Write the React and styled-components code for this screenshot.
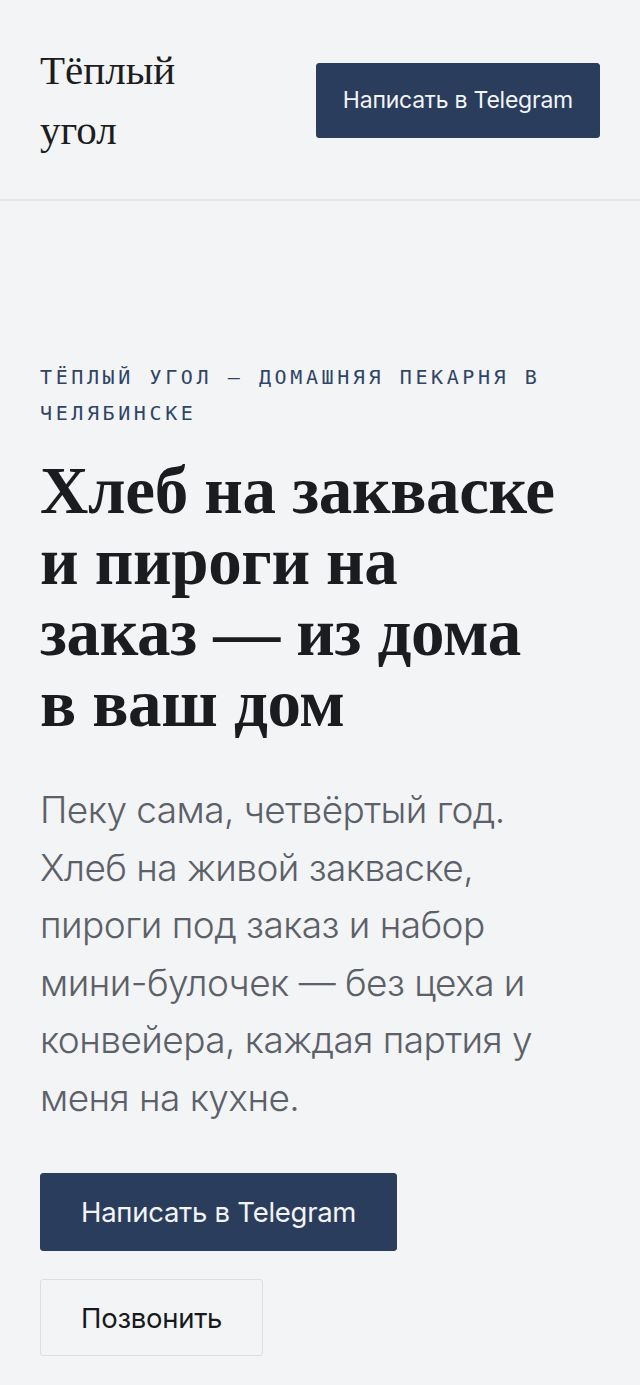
import React from "react";
import styled, { createGlobalStyle } from "styled-components";

const Global = createGlobalStyle`
  html, body { margin: 0; padding: 0; background: #f3f4f6; }
  body { font-family: Inter, "Noto Sans", sans-serif; color: #1c1d20; }
  * { box-sizing: border-box; }
`;

const Page = styled.div`
  min-height: 1385px;
  background: #f3f4f6;
`;

const Header = styled.header`
  display: flex;
  align-items: center;
  justify-content: space-between;
  padding: 40px 40px 39px;
  border-bottom: 2px solid #e3e5e8;
`;

const Logo = styled.div`
  font-family: "Liberation Serif", "Times New Roman", serif;
  font-size: 41px;
  line-height: 60px;
  font-weight: 400;
  color: #1c1d20;
  max-width: 170px;
`;

const Button = styled.a`
  display: inline-flex;
  align-items: center;
  justify-content: center;
  height: ${(p) => p.$h}px;
  padding: 0 ${(p) => p.$px}px;
  font-family: Inter, "Noto Sans", sans-serif;
  font-size: ${(p) => p.$fs}px;
  font-weight: 400;
  letter-spacing: -0.01em;
  border-radius: 3px;
  text-decoration: none;
  white-space: nowrap;
  background: ${(p) => (p.$variant === "ghost" ? "#f3f4f6" : "#2b3d5d")};
  color: ${(p) => (p.$variant === "ghost" ? "#18191c" : "#f2f4f7")};
  border: 1px solid ${(p) => (p.$variant === "ghost" ? "#dcdee2" : "#2b3d5d")};
`;

const Hero = styled.section`
  display: flex;
  flex-direction: column;
  padding: 158px 40px 28px;
`;

const Eyebrow = styled.p`
  margin: 0;
  font-family: "DejaVu Sans Mono", "Liberation Mono", monospace;
  font-size: 20px;
  line-height: 36px;
  letter-spacing: 3.6px;
  text-transform: uppercase;
  color: #2f4466;
`;

const Title = styled.h1`
  margin: 24px 0 0;
  font-family: "Liberation Serif", "Times New Roman", serif;
  font-weight: 700;
  font-size: 67px;
  line-height: 71px;
  letter-spacing: -0.005em;
  color: #1b1c1f;
  max-width: 525px;
`;

const Lead = styled.p`
  margin: 42px 0 0;
  font-family: Inter, "Noto Sans", sans-serif;
  font-weight: 300;
  font-size: 37px;
  line-height: 57.5px;
  letter-spacing: -0.015em;
  color: #5c6068;
  max-width: 545px;
`;

const Actions = styled.div`
  display: flex;
  flex-direction: column;
  align-items: flex-start;
  gap: 28px;
  margin-top: 47px;
`;

export default function App() {
  return (
    <Page>
      <Global />
      <Header>
        <Logo>Тёплый угол</Logo>
        <Button href="#" $h={75} $px={26} $fs={23}>
          Написать в Telegram
        </Button>
      </Header>
      <Hero>
        <Eyebrow>Тёплый угол — домашняя пекарня в Челябинске</Eyebrow>
        <Title>Хлеб на закваске и пироги на заказ — из дома в ваш дом</Title>
        <Lead>
          Пеку сама, четвёртый год. Хлеб на живой закваске, пироги под заказ и
          набор мини-булочек — без цеха и конвейера, каждая партия у меня на
          кухне.
        </Lead>
        <Actions>
          <Button href="#" $h={78} $px={40} $fs={27.5}>
            Написать в Telegram
          </Button>
          <Button href="#" $h={77} $px={40} $fs={27.5} $variant="ghost">
            Позвонить
          </Button>
        </Actions>
      </Hero>
    </Page>
  );
}
